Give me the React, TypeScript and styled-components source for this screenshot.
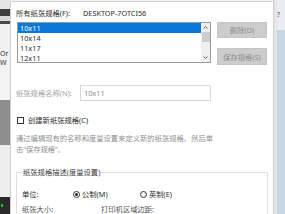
import React from "react";
import styled, { createGlobalStyle } from "styled-components";

const Global = createGlobalStyle`
  html, body { margin: 0; padding: 0; }
  body {
    width: 285px; height: 214px; overflow: hidden; background: #f2f2f2;
    font-family: "Noto Sans", "Noto Sans CJK SC", sans-serif;
    font-size: 7.3px; color: #2b2b2b;
  }
  * { box-sizing: border-box; }
`;

const Screen = styled.div`
  display: flex;
  width: 285px;
  height: 214px;
  overflow: hidden;
`;

const Desktop = styled.div`
  width: 10px;
  flex: none;
  display: flex;
  flex-direction: column;
  background: #ececec;
  overflow: hidden;
`;

const DeskBand = styled.div<{ $h: number; $bg: string }>`
  height: ${(p) => p.$h}px;
  flex: none;
  background: ${(p) => p.$bg};
  display: flex;
  align-items: center;
  font-size: 7px;
  color: #333;
  white-space: nowrap;
  overflow: hidden;
`;

const GreenDot = styled.span`
  width: 2px; height: 3px; background: #22c33a; margin-left: 1px;
`;

const Dialog = styled.div`
  flex: 1;
  display: flex;
  flex-direction: column;
  margin-top: 1px;
  border-top: 1px solid #d4d4d4;
  border-left: 1px solid #cfcfcf;
  background: #fff;
  padding: 6px 6px 0 5px;
  min-width: 0;
`;

const RightFrame = styled.div`
  width: 4px; flex: none; background: #e4e4e4;
  border-left: 1px solid #d0d0d0;
`;

const RightWindow = styled.div`
  width: 8px; flex: none; display: flex; flex-direction: column;
  background: #c9d6e4;
`;

const RightTop = styled.div`
  height: 30px; background: #e9edf1; display: flex; align-items: flex-start;
  padding-top: 10px; font-size: 7px; color: #555; overflow: hidden;
`;

const Line = styled.div<{ $top?: number; $color?: string }>`
  height: 10px;
  line-height: 10px;
  margin-top: ${(p) => p.$top ?? 0}px;
  display: flex;
  align-items: center;
  white-space: nowrap;
  color: ${(p) => p.$color ?? "#2b2b2b"};
`;

const Label = styled.span<{ $w?: number; $color?: string }>`
  width: ${(p) => (p.$w ? `${p.$w}px` : "auto")};
  flex: none;
  color: ${(p) => p.$color ?? "inherit"};
`;

const ListRow = styled.div`
  display: flex;
  margin-top: 4px;
  height: 43px;
`;

const ListBox = styled.div`
  margin-left: 1px;
  width: 194px;
  height: 41px;
  border: 1px solid #9a9a9a;
  display: flex;
  overflow: hidden;
`;

const Items = styled.div`
  flex: 1;
  display: flex;
  flex-direction: column;
`;

const Item = styled.div<{ $sel?: boolean }>`
  height: 10px;
  flex: none;
  line-height: 10px;
  padding-left: 2px;
  background: ${(p) => (p.$sel ? "#0a78d7" : "transparent")};
  color: ${(p) => (p.$sel ? "#fff" : "#2b2b2b")};
`;

const ScrollBar = styled.div`
  width: 9px;
  display: flex;
  flex-direction: column;
  align-items: center;
  background: #f0f0f0;
`;

const Arrow = styled.svg`
  width: 9px; height: 9px; flex: none;
`;

const Thumb = styled.div`
  width: 8px; height: 10px; background: #cdcdcd; flex: none;
`;

const Spacer = styled.div`
  flex: 1;
`;

const ButtonCol = styled.div`
  margin-left: 6px;
  display: flex;
  flex-direction: column;
  gap: 10px;
`;

const Button = styled.div<{ $h: number }>`
  width: 50px;
  height: ${(p) => p.$h}px;
  background: #cccccc;
  border: 1px solid #c6c6c6;
  color: #8e8e8e;
  display: flex;
  align-items: center;
  justify-content: center;
  white-space: nowrap;
`;

const NameRow = styled.div`
  margin-top: 20px;
  height: 16px;
  display: flex;
  align-items: center;
`;

const Input = styled.div`
  margin-left: auto;
  width: 131px;
  height: 16px;
  margin-right: 56px;
  border: 1px solid #d9d9d9;
  padding-left: 3px;
  display: flex;
  align-items: center;
  color: #8a8a8a;
`;

const CheckBox = styled.span`
  width: 7px; height: 7px; border: 1px solid #333; flex: none;
  margin: 0 4px 0 1px;
`;

const Desc = styled.div`
  margin-top: 8px;
  line-height: 11px;
  color: #8f8f8f;
  white-space: nowrap;
`;

const Group = styled.fieldset`
  margin: 12px 0 0 0;
  padding: 0 0 0 5px;
  border: 1px solid #dedede;
  border-bottom: none;
  width: 252px;
  flex: 1;
  min-width: 0;
`;

const Legend = styled.legend`
  padding: 0 1px;
  margin-left: 0;
  line-height: 10px;
  color: #3c3c3c;
`;

const Radio = styled.span<{ $on?: boolean }>`
  width: 7px; height: 7px; border-radius: 50%; border: 1px solid #333;
  display: inline-flex; align-items: center; justify-content: center;
  flex: none; margin-right: 2px;
  &::after {
    content: "";
    width: 3px; height: 3px; border-radius: 50%;
    background: ${(p) => (p.$on ? "#222" : "transparent")};
  }
`;

const Option = styled.span<{ $w?: number }>`
  display: inline-flex;
  align-items: center;
  width: ${(p) => (p.$w ? `${p.$w}px` : "auto")};
  flex: none;
`;

export default function App() {
  return (
    <>
      <Global />
      <Screen>
        <Desktop>
          <DeskBand $h={9} $bg="#e4e4e4" />
          <DeskBand $h={7} $bg="#3e3e3e" />
          <DeskBand $h={5} $bg="#d8d8d8" />
          <DeskBand $h={3} $bg="#4a4a4a" />
          <DeskBand $h={25} $bg="#f1f1f1" />
          <DeskBand $h={9} $bg="#f1f1f1">Or</DeskBand>
          <DeskBand $h={9} $bg="#f1f1f1">W</DeskBand>
          <DeskBand $h={33} $bg="#f3f3f3" />
          <DeskBand $h={45} $bg="#8e8e8e" />
          <DeskBand $h={52} $bg="#ededed" />
          <DeskBand $h={17} $bg="#2a2a2a">
            <GreenDot />
          </DeskBand>
        </Desktop>
        <Dialog>
          <Line>
            <Label $w={67}>所有纸张规格(F):</Label>
            <Label>DESKTOP-7OTCI56</Label>
          </Line>
          <ListRow>
            <ListBox>
              <Items>
                <Item $sel>10x11</Item>
                <Item>10x14</Item>
                <Item>11x17</Item>
                <Item>12x11</Item>
              </Items>
              <ScrollBar>
                <Arrow viewBox="0 0 9 9">
                  <path d="M2.5 5.5 L4.5 3.5 L6.5 5.5" fill="none" stroke="#606060" strokeWidth="1" />
                </Arrow>
                <Thumb />
                <Spacer />
                <Arrow viewBox="0 0 9 9">
                  <path d="M2.5 3.5 L4.5 5.5 L6.5 3.5" fill="none" stroke="#606060" strokeWidth="1" />
                </Arrow>
              </ScrollBar>
            </ListBox>
            <ButtonCol>
              <Button $h={16}>删除(D)</Button>
              <Button $h={17}>保存规格(S)</Button>
            </ButtonCol>
          </ListRow>
          <NameRow>
            <Label $color="#a3a3a3">纸张规格名称(N):</Label>
            <Input>10x11</Input>
          </NameRow>
          <Line $top={14}>
            <CheckBox />
            <Label>创建新纸张规格(C)</Label>
          </Line>
          <Desc>
            通过编辑现有的名称和度量设置来定义新的纸张规格。然后单
            <br />
            击“保存规格”。
          </Desc>
          <Group>
            <Legend>纸张规格描述(度量设置)</Legend>
            <Line $top={12}>
              <Label $w={51}>单位:</Label>
              <Option $w={67}>
                <Radio $on />
                公制(M)
              </Option>
              <Option>
                <Radio />
                英制(E)
              </Option>
            </Line>
            <Line $top={5} $color="#555">
              <Label $w={79}>纸张大小:</Label>
              <Label>打印机区域边距:</Label>
            </Line>
          </Group>
        </Dialog>
        <RightFrame />
        <RightWindow>
          <RightTop>?</RightTop>
        </RightWindow>
      </Screen>
    </>
  );
}
